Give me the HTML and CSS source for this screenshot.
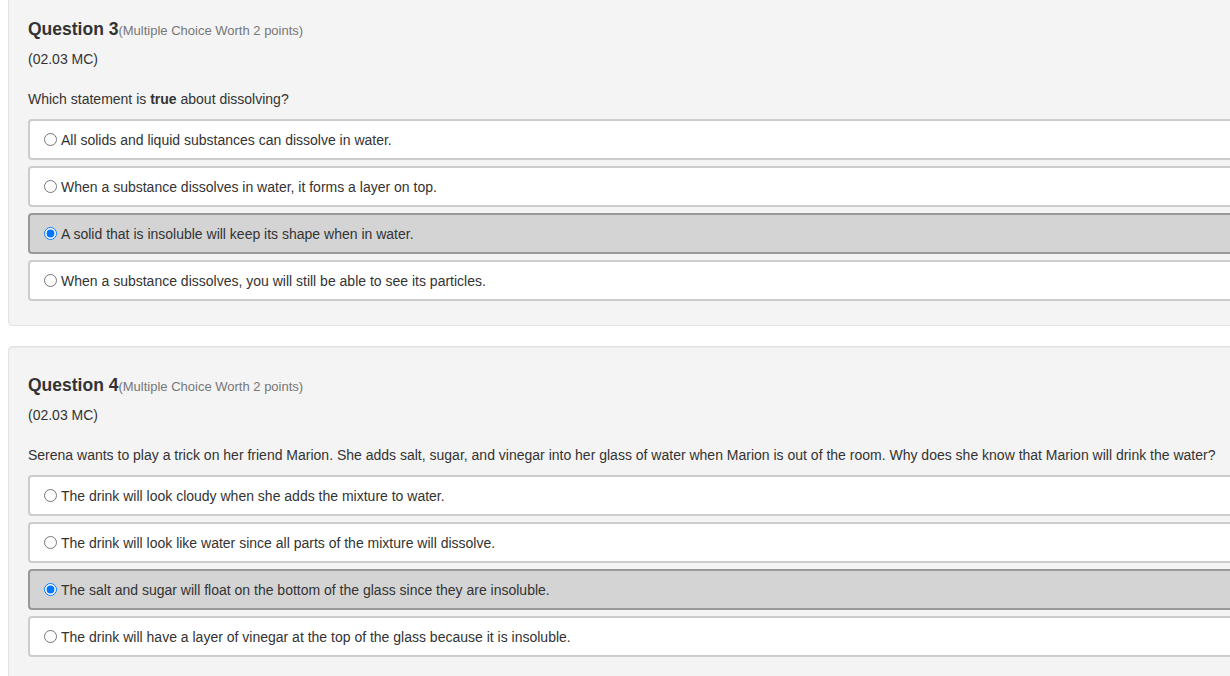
FILE: index.html
```html
<!DOCTYPE html>
<html>
<head>
<meta charset="utf-8">
<link rel="stylesheet" href="styles.css">
</head>
<body>
<div class="page">
  <div class="panel">
    <h3 class="qhead">Question 3<span class="worth">(Multiple Choice Worth 2 points)</span></h3>
    <p class="code">(02.03 MC)</p>
    <p class="stem">Which statement is <b>true</b> about dissolving?</p>
    <div class="options">
      <label class="opt"><input type="radio" name="q3">All solids and liquid substances can dissolve in water.</label>
      <label class="opt"><input type="radio" name="q3">When a substance dissolves in water, it forms a layer on top.</label>
      <label class="opt sel"><input type="radio" name="q3" checked>A solid that is insoluble will keep its shape when in water.</label>
      <label class="opt"><input type="radio" name="q3">When a substance dissolves, you will still be able to see its particles.</label>
    </div>
  </div>
  <div class="panel">
    <h3 class="qhead">Question 4<span class="worth">(Multiple Choice Worth 2 points)</span></h3>
    <p class="code">(02.03 MC)</p>
    <p class="stem">Serena wants to play a trick on her friend Marion. She adds salt, sugar, and vinegar into her glass of water when Marion is out of the room. Why does she know that Marion will drink the water?</p>
    <div class="options">
      <label class="opt"><input type="radio" name="q4">The drink will look cloudy when she adds the mixture to water.</label>
      <label class="opt"><input type="radio" name="q4">The drink will look like water since all parts of the mixture will dissolve.</label>
      <label class="opt sel"><input type="radio" name="q4" checked>The salt and sugar will float on the bottom of the glass since they are insoluble.</label>
      <label class="opt"><input type="radio" name="q4">The drink will have a layer of vinegar at the top of the glass because it is insoluble.</label>
    </div>
  </div>
</div>
</body>
</html>
```
FILE: styles.css
```css
html, body {
  margin: 0;
  padding: 0;
  background: #ffffff;
  overflow: hidden;
}
body {
  font-family: "Liberation Sans", Arial, Helvetica, sans-serif;
  font-size: 14px;
  color: #333333;
}
.page {
  width: 1300px;
  margin-left: 8px;
  margin-top: -10px;
}
.panel {
  background: #f4f4f4;
  border: 1px solid #e3e3e3;
  border-radius: 4px;
  box-shadow: inset 0 1px 1px rgba(0,0,0,0.05);
  padding: 19px 19px 24px 19px;
  margin-bottom: 20px;
}
.qhead {
  margin: 9px 0 8px 0;
  font-size: 17.5px;
  line-height: 21px;
  font-weight: bold;
  color: #333333;
}
.worth {
  font-size: 13px;
  font-weight: normal;
  color: #777777;
}
.code {
  margin: 0;
  line-height: 20px;
}
.stem {
  margin: 20px 0 10px 0;
  line-height: 20px;
}
.options {
  display: flex;
  flex-direction: column;
  gap: 6px;
}
.opt {
  display: flex;
  align-items: center;
  height: 41px;
  box-sizing: border-box;
  padding-left: 14px;
  background: #ffffff;
  border: 2px solid #cccccc;
  border-radius: 4px;
}
.opt.sel {
  background: #d4d4d4;
  border-color: #999999;
}
.opt input {
  margin: 0 4px 0 0;
  width: 13px;
  height: 13px;
}
```
